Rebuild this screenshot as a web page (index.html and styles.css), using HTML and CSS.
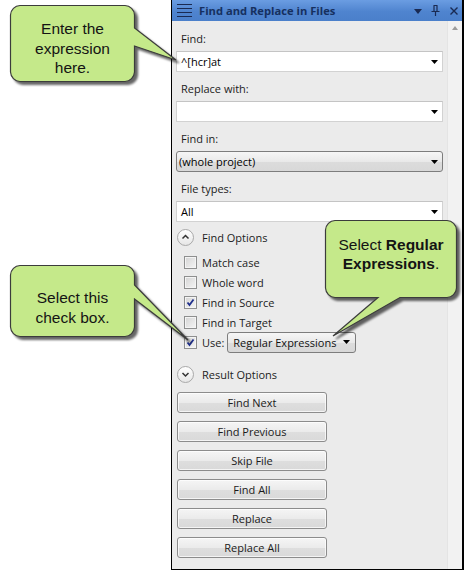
FILE: index.html
```html
<!DOCTYPE html>
<html>
<head>
<meta charset="utf-8">
<link rel="stylesheet" href="styles.css">
</head>
<body>
<div class="page">
  <div class="panel">
    <div class="titlebar">
      <svg class="menu-icon" width="16" height="13" viewBox="0 0 16 13"><path d="M0 0.5H15M0 4.5H15M0 8.5H15M0 12.5H15" stroke="#1a2a52" stroke-width="1"/></svg>
      <span class="title">Find and Replace in Files</span>
      <span class="tb-icons">
        <svg class="tb-drop" width="8" height="5" viewBox="0 0 8 5"><path d="M0 0H8L4 5Z" fill="#1a2a52"/></svg>
        <svg class="tb-pin" width="9" height="11" viewBox="0 0 9 11"><path d="M2.5 0.5H6.5M3 0.5V6.5M6 0.5V6.5M0.5 6.5H8.5M4.5 6.5V11" stroke="#1a2a52" stroke-width="1.2" fill="none"/></svg>
        <svg class="tb-close" width="8" height="8" viewBox="0 0 8 8"><path d="M0.5 0.5L7.5 7.5M7.5 0.5L0.5 7.5" stroke="#1a2a52" stroke-width="1.4"/></svg>
      </span>
    </div>
    <div class="body">
      <div class="content">
        <div class="field">
          <div class="label">Find:</div>
          <div class="input"><span class="value">^[hcr]at</span><svg class="arrow" width="7" height="4" viewBox="0 0 7 4"><path d="M0 0H7L3.5 4Z" fill="#000"/></svg></div>
        </div>
        <div class="field">
          <div class="label">Replace with:</div>
          <div class="input"><span class="value"></span><svg class="arrow" width="7" height="4" viewBox="0 0 7 4"><path d="M0 0H7L3.5 4Z" fill="#000"/></svg></div>
        </div>
        <div class="field">
          <div class="label">Find in:</div>
          <div class="input combo"><span class="value">(whole project)</span><svg class="arrow" width="7" height="4" viewBox="0 0 7 4"><path d="M0 0H7L3.5 4Z" fill="#000"/></svg></div>
        </div>
        <div class="field">
          <div class="label">File types:</div>
          <div class="input"><span class="value">All</span><svg class="arrow" width="7" height="4" viewBox="0 0 7 4"><path d="M0 0H7L3.5 4Z" fill="#000"/></svg></div>
        </div>

        <div class="section-head">
          <span class="expander"><svg width="17" height="17" viewBox="0 0 17 17"><path d="M5.5 9.5L8.5 6.5L11.5 9.5" stroke="#333" stroke-width="1.5" fill="none"/></svg></span>
          <span>Find Options</span>
        </div>
        <div class="checks">
          <div class="check"><span class="box"></span><span>Match case</span></div>
          <div class="check"><span class="box"></span><span>Whole word</span></div>
          <div class="check"><span class="box"><svg width="11" height="11" viewBox="0 0 11 11"><path d="M2.5 5.5L4.5 8L8.5 2.5" stroke="#1f2f8c" stroke-width="1.8" fill="none"/></svg></span><span>Find in Source</span></div>
          <div class="check"><span class="box"></span><span>Find in Target</span></div>
          <div class="check use"><span class="box"><svg width="11" height="11" viewBox="0 0 11 11"><path d="M2.5 5.5L4.5 8L8.5 2.5" stroke="#1f2f8c" stroke-width="1.8" fill="none"/></svg></span><span>Use:</span>
            <div class="mini-combo"><span>Regular Expressions</span><svg class="arrow" width="7" height="4" viewBox="0 0 7 4"><path d="M0 0H7L3.5 4Z" fill="#000"/></svg></div>
          </div>
        </div>
        <div class="section-head result">
          <span class="expander"><svg width="17" height="17" viewBox="0 0 17 17"><path d="M5.5 7L8.5 10L11.5 7" stroke="#333" stroke-width="1.5" fill="none"/></svg></span>
          <span>Result Options</span>
        </div>
        <div class="buttons">
          <div class="btn">Find Next</div>
          <div class="btn">Find Previous</div>
          <div class="btn">Skip File</div>
          <div class="btn">Find All</div>
          <div class="btn">Replace</div>
          <div class="btn">Replace All</div>
        </div>
      </div>
      <div class="scrollbar">
        <svg class="sb-up" width="6" height="4" viewBox="0 0 6 4"><path d="M0 4H6L3 0Z" fill="#9c9c9c"/></svg>
      </div>
    </div>
  </div>

  <div class="callout c1">
    <svg class="bubble" width="170" height="82" viewBox="0 0 170 82"><path d="M10 0.5H115A10 10 0 0 1 124.5 10V23L166 55L124.5 41V67A10 10 0 0 1 115 76.5H10A10 10 0 0 1 0.5 67V10A10 10 0 0 1 10 0.5Z"/></svg>
    <div class="ctext">Enter the<br>expression<br>here.</div>
  </div>

  <div class="callout c2">
    <svg class="bubble" width="182" height="80" viewBox="0 0 182 80"><path d="M10 0.5H115A10 10 0 0 1 124.5 10V20L178 75L124.5 34V62A10 10 0 0 1 115 71.5H10A10 10 0 0 1 0.5 62V10A10 10 0 0 1 10 0.5Z"/></svg>
    <div class="ctext">Select this<br>check box.</div>
  </div>

  <div class="callout c3">
    <svg class="bubble" width="140" height="120" viewBox="0 0 140 120"><path d="M10 0.5H122A10 10 0 0 1 131.5 10V68A10 10 0 0 1 122 77.5H75L8 116L53 77.5H10A10 10 0 0 1 0.5 68V10A10 10 0 0 1 10 0.5Z"/></svg>
    <div class="ctext">Select <b>Regular</b><br><b>Expressions</b>.</div>
  </div>
</div>
</body>
</html>
```

FILE: styles.css
```css
html, body {
  margin: 0;
  padding: 0;
  background: #ffffff;
}

.page {
  position: relative;
  width: 464px;
  height: 572px;
  overflow: hidden;
  font-family: "Open Sans", "Noto Sans", sans-serif;
}

.panel {
  margin-left: 171px;
  width: 293px;
  height: 570px;
  box-sizing: border-box;
  border-left: 1px solid #000;
  border-right: 2px solid #000;
  border-bottom: 1px solid #000;
  display: flex;
  flex-direction: column;
}

.titlebar {
  height: 21px;
  flex: none;
  background: linear-gradient(#6b9de2, #4f84cf 55%, #4a7fca);
  display: flex;
  align-items: center;
  padding-left: 5px;
  padding-right: 4px;
}

.menu-icon {
  display: block;
  flex: none;
}

.title {
  margin-left: 6px;
  font-size: 11.2px;
  font-weight: 700;
  color: #16305f;
  flex: 1;
  white-space: nowrap;
}

.tb-icons {
  display: flex;
  align-items: center;
}

.tb-drop { margin-top: 1px; }
.tb-pin { margin-left: 9px; }
.tb-close { margin-left: 10px; }

.body {
  flex: 1;
  display: flex;
}

.content {
  flex: 1;
  background: #ebebeb;
  padding: 8px 4px 0 4px;
  font-size: 11px;
  color: #1c1c1c;
}

.scrollbar {
  width: 15px;
  flex: none;
  background: #f2f2f2;
  border-left: 1px solid #e4e4e4;
  box-sizing: border-box;
  position: relative;
}

.sb-up {
  display: block;
  margin: 5px 0 0 4px;
}

.label {
  height: 20px;
  line-height: 20px;
  padding-left: 5px;
}

.input {
  height: 21px;
  margin-top: 2px;
  margin-bottom: 7px;
  box-sizing: border-box;
  background: #ffffff;
  border: 1px solid #d2d2d2;
  border-top-color: #c4c4c4;
  display: flex;
  align-items: center;
  justify-content: space-between;
  padding: 0 4px 0 4px;
  color: #000;
}

.input .value {
  line-height: 18px;
}

.input.combo {
  border: 1px solid #7d7d7d;
  border-radius: 3px;
  background: linear-gradient(#f6f6f6, #e9e9e9 50%, #dcdcdc 51%, #d8d8d8);
  padding-left: 2px;
}

.arrow {
  display: block;
  flex: none;
}

.section-head {
  display: flex;
  align-items: center;
  height: 17px;
  padding-left: 1px;
}

.expander {
  width: 17px;
  height: 17px;
  box-sizing: border-box;
  border: 1px solid #a9a9a9;
  border-radius: 50%;
  background: linear-gradient(#ffffff, #e6e6e6);
  margin-right: 8px;
  display: flex;
  align-items: center;
  justify-content: center;
}

.expander svg {
  display: block;
  margin: -1px;
}

.checks {
  margin-top: 6px;
  padding-left: 8px;
}

.check {
  height: 20px;
  display: flex;
  align-items: center;
}

.box {
  width: 13px;
  height: 13px;
  box-sizing: border-box;
  border: 1px solid #8e8f8f;
  background: linear-gradient(135deg, #d4d4d4, #f5f5f5);
  box-shadow: inset 0 0 0 1px #f4f4f4;
  margin-right: 5px;
  display: flex;
  align-items: center;
  justify-content: center;
  flex: none;
}

.box svg {
  display: block;
}

.mini-combo {
  margin-left: 3px;
  width: 129px;
  height: 21px;
  box-sizing: border-box;
  border: 1px solid #7d7d7d;
  border-radius: 3px;
  background: linear-gradient(#f6f6f6, #e9e9e9 50%, #dcdcdc 51%, #d8d8d8);
  display: flex;
  align-items: center;
  justify-content: space-between;
  padding: 0 5px 0 5px;
  color: #111;
}

.section-head.result {
  margin-top: 14px;
}

.buttons {
  margin-top: 9px;
  padding-left: 1px;
  display: flex;
  flex-direction: column;
  gap: 8px;
}

.btn {
  width: 150px;
  height: 21px;
  box-sizing: border-box;
  border: 1px solid #8c8c8c;
  border-radius: 3px;
  background: linear-gradient(#f5f5f5, #ebebeb 50%, #dedede 51%, #d9d9d9);
  box-shadow: inset 0 0 0 1px rgba(255,255,255,0.7);
  text-align: center;
  line-height: 19px;
  color: #1a1a1a;
}

/* callouts */
.callout {
  position: absolute;
  font-family: "Liberation Sans", Arial, sans-serif;
  font-size: 15.5px;
  color: #141414;
}

.bubble {
  position: absolute;
  left: 0;
  top: 0;
  overflow: visible;
  filter: drop-shadow(3px 3px 1px rgba(0,0,0,0.6));
}

.bubble path {
  fill: #c5e98a;
  stroke: #3c3c3c;
  stroke-width: 1.2;
}

.ctext {
  position: absolute;
  left: 0;
  text-align: center;
  line-height: 19.5px;
  white-space: nowrap;
}

.c1 { left: 10px; top: 5px; }
.c1 .ctext { top: 14px; width: 125px; }

.c2 { left: 10px; top: 265px; }
.c2 .ctext { top: 23px; width: 125px; }

.c3 { left: 325px; top: 220px; }
.c3 .ctext { top: 16px; width: 132px; line-height: 18.5px; }
```
